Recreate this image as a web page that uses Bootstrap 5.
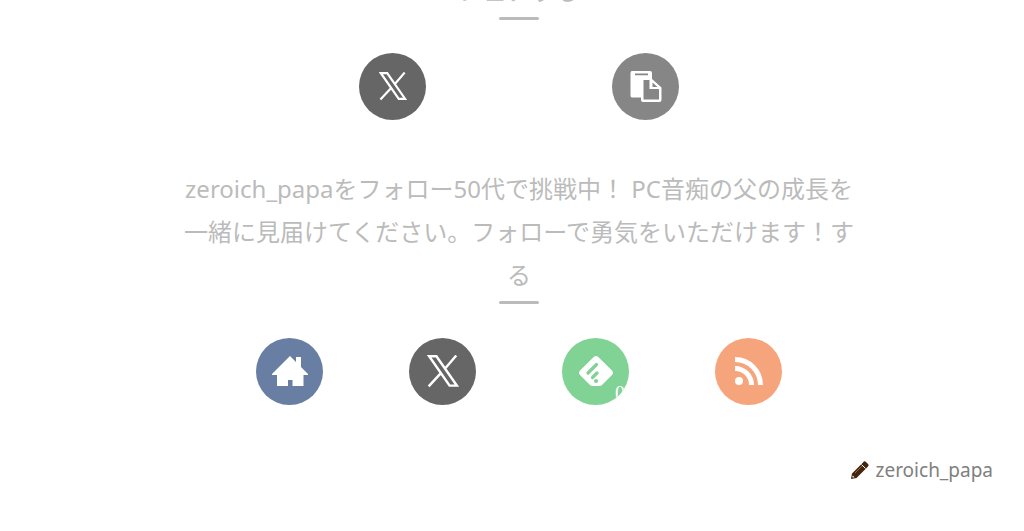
<!DOCTYPE html>
<html lang="ja">
<head>
<meta charset="utf-8">
<meta name="viewport" content="width=device-width, initial-scale=1">
<title>zeroich_papa</title>
<link href="https://cdn.jsdelivr.net/npm/bootstrap@5.3.0/dist/css/bootstrap.min.css" rel="stylesheet">
<style>
body { font-family: "Noto Sans", "Noto Sans CJK JP", sans-serif; color: #777; background: #fff; overflow-x: hidden; }
.entry-foot { padding: 0 31px 0 45px; }
.share-title { height: 20px; overflow: hidden; }
.caption { max-width: 680px; font-size: 24px; line-height: 43px; color: #bbb; margin-bottom: 5px; }
.rule { width: 40px; height: 3px; border-radius: 2px; background: #bbb; }
.share-row { gap: 186px; margin-top: 33px; }
.follow-row { gap: 86px; margin-top: 34px; }
.follow-title { margin-top: 47px; }
.sns { width: 67px; height: 67px; position: relative; overflow: hidden; color: #fff; }
.sns svg { display: block; }
.sns-x { background: #666; }
.sns-copy { background: #868686; }
.sns-home { background: #687ea3; }
.sns-feedly { background: #81d295; }
.sns-rss { background: #f6a47b; }
.follow-count { position: absolute; right: 4px; bottom: 0; font: 20px/24px "Liberation Serif", serif; }
.author { margin-top: 50px; font-size: 19px; line-height: 30px; gap: 7px; }
.author a { color: #808080; }
</style>
</head>
<body>
<footer class="entry-foot">
  <section>
    <div class="share-title d-flex flex-column align-items-center justify-content-end">
      <div class="caption text-center flex-shrink-0">シェアする</div>
      <span class="rule flex-shrink-0"></span>
    </div>
    <div class="share-row d-flex justify-content-center">
      <a href="#x" class="sns sns-x rounded-circle d-flex align-items-center justify-content-center" aria-label="X">
        <svg width="28" height="30" viewBox="0 0 30 32" fill="none" stroke="currentColor" stroke-width="2.3"><path d="M2 1.2H8.8L28 28.8H21.2ZM27.5 .5 16.8 13M13 17 1.5 29.5"/></svg>
      </a>
      <button type="button" class="sns sns-copy rounded-circle border-0 p-0 d-flex align-items-center justify-content-center" aria-label="コピー">
        <svg width="32" height="34" viewBox="0 0 32 34"><path fill="#fff" d="M2 1H20Q22 1 22 3V9L31.500 17.500V30Q31.500 32 29.500 32H13Q11 32 11 30V27.500H2Q.5 27.500 .5 25.500V3Q.5 1 2 1Z"/><path fill="#868686" d="M5 3.500H18V5.300H5ZM13.500 10H19.500V19H29V29.500H13.500Z"/><path fill="#868686" d="M22.500 12.500 27.500 17H22.500Z"/></svg>
      </button>
    </div>
  </section>
  <section class="follow-title">
    <div class="caption text-center mx-auto">zeroich_papaをフォロー50代で挑戦中！ PC音痴の父の成長を一緒に見届けてください。フォローで勇気をいただけます！する</div>
    <div class="rule mx-auto"></div>
    <div class="follow-row d-flex justify-content-center">
      <a href="#home" class="sns sns-home rounded-circle d-flex align-items-center justify-content-center" aria-label="ホーム">
        <svg width="36" height="32" viewBox="0 0 36 32" fill="currentColor"><path d="M18 0 24 6V1H29V11L36 18V19H31.500V30H20.500V24H16V30H5V19H0V18Z"/></svg>
      </a>
      <a href="#x" class="sns sns-x rounded-circle d-flex align-items-center justify-content-center" aria-label="X">
        <svg width="32" height="34" viewBox="0 0 30 32" fill="none" stroke="currentColor" stroke-width="2.3"><path d="M2 1.2H8.800L28 28.800H21.200ZM27.500 .5 16.800 13M13 17 1.500 29.500"/></svg>
      </a>
      <a href="#feedly" class="sns sns-feedly rounded-circle d-flex align-items-center justify-content-center" aria-label="feedly">
        <svg width="34" height="32" viewBox="0 0 34 32"><path fill="#fff" d="M14.500 1.200Q17-1 19.500 1.200L33 14.500Q35 17 33 19L23.500 28.500Q22 30 20 30H14Q12 30 10.500 28.500L1 19Q-1 17 1 14.500Z"/><g stroke="#81d295" stroke-width="3.200" stroke-linecap="round"><path d="M9 17 17.500 8.500M13.500 21.500 18 17"/><path d="M17 25H17.100" stroke-width="4"/></g></svg>
        <span class="follow-count">0</span>
      </a>
      <a href="#rss" class="sns sns-rss rounded-circle d-flex align-items-center justify-content-center" aria-label="RSS">
        <svg width="28" height="30" viewBox="0 0 28 30"><circle cx="4" cy="24" r="4" fill="#fff"/><path d="M0 11.500A16.500 16.500 0 0 1 16.500 28M0 2.500A25.500 25.500 0 0 1 25.500 28" fill="none" stroke="#fff" stroke-width="5"/></svg>
      </a>
    </div>
  </section>
  <div class="author d-flex justify-content-end align-items-center">
    <svg width="18" height="18" viewBox="0 0 18 18" aria-hidden="true"><path fill="#44260f" d="M12 1.500Q13.500-.5 15 1L17 3Q18.500 4.500 16.500 6L5.500 17 0 18 1 12.500Z"/><path d="M10.500 3.500 14.500 7.500" stroke="#fff" stroke-width="1"/><path d="M4 12 11 5" stroke="#9a683c" stroke-width="1"/><path fill="#fff" d="M1.800 14.500 3.500 16.200 2 16.600 1.300 16Z"/></svg>
    <a href="#author" class="text-decoration-none">zeroich_papa</a>
  </div>
</footer>
<script src="https://cdn.jsdelivr.net/npm/bootstrap@5.3.0/dist/js/bootstrap.bundle.min.js"></script>
</body>
</html>
